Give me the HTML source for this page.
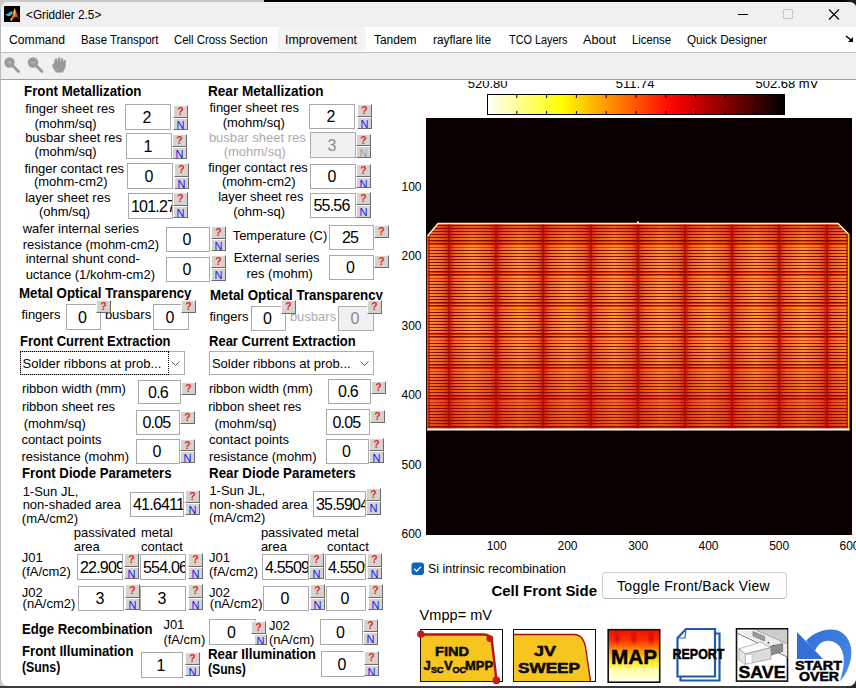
<!DOCTYPE html>
<html><head><meta charset="utf-8"><style>
html,body{margin:0;padding:0;}
body{width:856px;height:688px;position:relative;overflow:hidden;background:#c9c9c9;font-family:"Liberation Sans",sans-serif;}
.t{position:absolute;white-space:nowrap;line-height:1;}
.box{position:absolute;border:1px solid #a9a9a9;background:#fff;font-size:16px;letter-spacing:-0.8px;color:#000;overflow:hidden;white-space:nowrap;}
.box.dis{background:#f0f0f0;color:#8a8a8a;border-color:#adadad;}
.qb{position:absolute;background:#d6d3ce;border-top:1px solid #fff;border-left:1px solid #fff;border-right:1px solid #6b6b6b;border-bottom:1px solid #6b6b6b;overflow:hidden;text-align:center;}
.q{position:absolute;left:0;right:0;top:-1px;font-size:10.5px;font-weight:bold;color:#e3261c;line-height:12px;}
.n{position:absolute;left:0;right:0;top:0px;font-size:11px;color:#1515ff;line-height:12px;}
.win{position:absolute;left:0;top:2px;width:870px;height:684px;background:#fff;border-radius:7px;overflow:hidden;border-left:1px solid #b9b9b9;box-sizing:border-box;}
.pop{position:absolute;border:1px solid #adadad;background:#fff;box-sizing:border-box;}
</style></head><body>

<div style="position:absolute;left:0;top:0;width:264px;height:2px;background:#c8c8c8"></div>
<div style="position:absolute;left:264px;top:0;width:600px;height:2px;background:#000"></div>
<div style="position:absolute;left:0;top:686px;width:856px;height:2px;background:#3c3c3c"></div>
<div class="win">
<div style="position:absolute;left:0;top:0;width:870px;height:25px;background:#f0f0f0"></div>
<div style="position:absolute;left:0;top:25px;width:870px;height:25px;background:#fff"></div>
<div style="position:absolute;left:0;top:50px;width:870px;height:1px;background:#bdbdbd"></div>
<div style="position:absolute;left:0;top:51px;width:870px;height:26px;background:#f0f0f0"></div>
<div style="position:absolute;left:0;top:77px;width:870px;height:1px;background:#a0a0a0"></div>
</div>
<svg style="position:absolute;left:4px;top:6px" width="16" height="16" viewBox="0 0 16 16">
<rect width="16" height="16" fill="#000"/>
<path d="M1.2 8.8 L4.5 7.2 L7.8 5 L8.8 6.8 L6.8 9.4 L4.5 10.2 Z" fill="#4fb0dd"/>
<path d="M6.3 13.8 L8 10.2 L9.5 6 L10.5 1.8 L12 5 L13.5 9 L14.6 12.5 L12.5 10.8 L10.5 11.2 L8.5 13.2 L7.2 15 Z" fill="#e07020"/>
<path d="M10.5 2 L11.3 6 L10.2 9.5 L9.2 7 Z" fill="#f8c040"/>
<path d="M6.3 13.8 L8 12 L8.8 13 L7.2 15 Z" fill="#f8c040"/>
<path d="M11.6 4.2 L14.6 12.5 L12.6 10.8 Z" fill="#a83818"/>
</svg>
<div class="t" style="left:25.70px;top:9.49px;font-size:12.3px;color:#000;transform:scaleX(0.9576);transform-origin:0 0;">&lt;Griddler 2.5&gt;</div>
<div style="position:absolute;left:738px;top:14px;width:10px;height:1px;background:#000"></div>
<div style="position:absolute;left:783px;top:9px;width:8px;height:8px;border:1px solid #c5c5c5;border-radius:1px"></div>
<svg style="position:absolute;left:828px;top:9px" width="12" height="11" viewBox="0 0 12 11"><path d="M1 0.5 L11 10.5 M11 0.5 L1 10.5" stroke="#000" stroke-width="1.1"/></svg>
<div style="position:absolute;left:278px;top:27px;width:88px;height:24px;background:#f3f3f3;border-radius:4px"></div>
<div class="t" style="left:8.90px;top:34.39px;font-size:12.3px;color:#000;transform:scaleX(0.9870);transform-origin:0 0;">Command</div>
<div class="t" style="left:80.90px;top:34.39px;font-size:12.3px;color:#000;transform:scaleX(0.9291);transform-origin:0 0;">Base Transport</div>
<div class="t" style="left:174.40px;top:34.39px;font-size:12.3px;color:#000;transform:scaleX(0.9242);transform-origin:0 0;">Cell Cross Section</div>
<div class="t" style="left:285.40px;top:34.39px;font-size:12.3px;color:#000;transform:scaleX(1.0031);transform-origin:0 0;">Improvement</div>
<div class="t" style="left:374.40px;top:34.39px;font-size:12.3px;color:#000;transform:scaleX(0.9712);transform-origin:0 0;">Tandem</div>
<div class="t" style="left:433.40px;top:34.39px;font-size:12.3px;color:#000;transform:scaleX(0.9642);transform-origin:0 0;">rayflare lite</div>
<div class="t" style="left:508.90px;top:34.39px;font-size:12.3px;color:#000;transform:scaleX(0.8824);transform-origin:0 0;">TCO Layers</div>
<div class="t" style="left:583.40px;top:34.39px;font-size:12.3px;color:#000;transform:scaleX(1.0266);transform-origin:0 0;">About</div>
<div class="t" style="left:632.40px;top:34.39px;font-size:12.3px;color:#000;transform:scaleX(0.9199);transform-origin:0 0;">License</div>
<div class="t" style="left:687.40px;top:34.39px;font-size:12.3px;color:#000;transform:scaleX(0.9514);transform-origin:0 0;">Quick Designer</div>
<svg style="position:absolute;left:845px;top:35px" width="9" height="8" viewBox="0 0 9 8"><path d="M1 1 L6 5" stroke="#000" stroke-width="1.6"/><path d="M3 7 L8 7 L8 2 Z" fill="#000"/></svg>
<svg style="position:absolute;left:0;top:53px" width="70" height="25" viewBox="0 53 70 25">
<circle cx="9.5" cy="62.5" r="5.2" fill="#9a9a9a"/>
<path d="M9.5 60 v5 M7 62.5 h5" stroke="#bdbdbd" stroke-width="1"/>
<path d="M13 66 L18.5 71.5" stroke="#9a9a9a" stroke-width="2.8" stroke-linecap="round"/>
<circle cx="33" cy="62.5" r="5.2" fill="#9a9a9a"/>
<path d="M30.5 62.5 h5" stroke="#bdbdbd" stroke-width="1"/>
<path d="M36.5 66 L42 71.5" stroke="#9a9a9a" stroke-width="2.8" stroke-linecap="round"/>
<path d="M52 65 L54 63 L55 58.5 L57 58.5 L57.5 62 L58 57.5 L60 57.5 L60.5 62 L61 58 L63 58.5 L63.5 62 L64 60 L66 60.5 L65.5 67 L63 72.5 L56 72.5 L53 68 Z" fill="#9a9a9a"/>
</svg>
<div class="t" style="left:23.90px;top:83.65px;font-size:14px;font-weight:bold;color:#000;transform:scaleX(0.9501);transform-origin:0 0;">Front Metallization</div>
<div class="t" style="left:208.15px;top:83.65px;font-size:14px;font-weight:bold;color:#000;transform:scaleX(0.9703);transform-origin:0 0;">Rear Metallization</div>
<div class="t" style="left:19.40px;top:286.15px;font-size:14px;font-weight:bold;color:#000;transform:scaleX(0.9474);transform-origin:0 0;">Metal Optical Transparency</div>
<div class="t" style="left:209.90px;top:287.65px;font-size:14px;font-weight:bold;color:#000;transform:scaleX(0.9502);transform-origin:0 0;">Metal Optical Transparency</div>
<div class="t" style="left:20.15px;top:333.75px;font-size:14px;font-weight:bold;color:#000;transform:scaleX(0.9258);transform-origin:0 0;">Front Current Extraction</div>
<div class="t" style="left:208.90px;top:333.75px;font-size:14px;font-weight:bold;color:#000;transform:scaleX(0.9292);transform-origin:0 0;">Rear Current Extraction</div>
<div class="t" style="left:22.40px;top:465.65px;font-size:14px;font-weight:bold;color:#000;transform:scaleX(0.9420);transform-origin:0 0;">Front Diode Parameters</div>
<div class="t" style="left:208.90px;top:465.65px;font-size:14px;font-weight:bold;color:#000;transform:scaleX(0.9524);transform-origin:0 0;">Rear Diode Parameters</div>
<div class="t" style="left:21.80px;top:622.05px;font-size:14px;font-weight:bold;color:#000;transform:scaleX(0.9380);transform-origin:0 0;">Edge Recombination</div>
<div class="t" style="left:21.80px;top:644.45px;font-size:14px;font-weight:bold;color:#000;transform:scaleX(0.9433);transform-origin:0 0;">Front Illumination</div>
<div class="t" style="left:21.80px;top:660.35px;font-size:14px;font-weight:bold;color:#000;transform:scaleX(0.8794);transform-origin:0 0;">(Suns)</div>
<div class="t" style="left:208.40px;top:646.65px;font-size:14px;font-weight:bold;color:#000;transform:scaleX(0.9509);transform-origin:0 0;">Rear Illumination</div>
<div class="t" style="left:208.40px;top:662.25px;font-size:14px;font-weight:bold;color:#000;transform:scaleX(0.8702);transform-origin:0 0;">(Suns)</div>
<div class="t" style="left:25.15px;top:102.00px;font-size:13px;color:#000;">finger sheet res</div>
<div class="t" style="left:34.40px;top:117.00px;font-size:13px;color:#000;">(mohm/sq)</div>
<div class="t" style="left:25.15px;top:130.75px;font-size:13px;color:#000;">busbar sheet res</div>
<div class="t" style="left:34.40px;top:145.25px;font-size:13px;color:#000;">(mohm/sq)</div>
<div class="t" style="left:24.40px;top:161.50px;font-size:13px;color:#000;">finger contact res</div>
<div class="t" style="left:33.90px;top:175.25px;font-size:13px;color:#000;">(mohm-cm2)</div>
<div class="t" style="left:25.15px;top:190.75px;font-size:13px;color:#000;">layer sheet res</div>
<div class="t" style="left:38.90px;top:205.25px;font-size:13px;color:#000;">(ohm/sq)</div>
<div class="t" style="left:22.65px;top:222.00px;font-size:13px;color:#000;">wafer internal series</div>
<div class="t" style="left:22.65px;top:237.75px;font-size:13px;color:#000;">resistance (mohm-cm2)</div>
<div class="t" style="left:25.65px;top:252.00px;font-size:13px;color:#000;">internal shunt cond-</div>
<div class="t" style="left:25.65px;top:267.75px;font-size:13px;color:#000;">uctance (1/kohm-cm2)</div>
<div class="t" style="left:21.40px;top:308.25px;font-size:13px;color:#000;">fingers</div>
<div class="t" style="left:104.90px;top:308.25px;font-size:13px;color:#000;">busbars</div>
<div class="t" style="left:21.90px;top:381.50px;font-size:13px;color:#000;">ribbon width (mm)</div>
<div class="t" style="left:21.90px;top:400.25px;font-size:13px;color:#000;">ribbon sheet res</div>
<div class="t" style="left:23.65px;top:416.50px;font-size:13px;color:#000;">(mohm/sq)</div>
<div class="t" style="left:21.40px;top:433.25px;font-size:13px;color:#000;">contact points</div>
<div class="t" style="left:21.40px;top:449.75px;font-size:13px;color:#000;">resistance (mohm)</div>
<div class="t" style="left:22.65px;top:484.50px;font-size:13px;color:#000;">1-Sun JL,</div>
<div class="t" style="left:22.65px;top:498.40px;font-size:13px;color:#000;">non-shaded area</div>
<div class="t" style="left:21.80px;top:512.20px;font-size:13px;color:#000;">(mA/cm2)</div>
<div class="t" style="left:73.70px;top:525.90px;font-size:13px;color:#000;">passivated</div>
<div class="t" style="left:73.70px;top:540.40px;font-size:13px;color:#000;">area</div>
<div class="t" style="left:141.00px;top:525.90px;font-size:13px;color:#000;">metal</div>
<div class="t" style="left:141.00px;top:540.40px;font-size:13px;color:#000;">contact</div>
<div class="t" style="left:21.80px;top:550.50px;font-size:13px;color:#000;">J01</div>
<div class="t" style="left:21.80px;top:565.00px;font-size:13px;color:#000;">(fA/cm2)</div>
<div class="t" style="left:21.80px;top:585.50px;font-size:13px;color:#000;">J02</div>
<div class="t" style="left:22.60px;top:597.00px;font-size:13px;color:#000;">(nA/cm2)</div>
<div class="t" style="left:163.40px;top:618.00px;font-size:13px;color:#000;">J01</div>
<div class="t" style="left:163.40px;top:633.00px;font-size:13px;color:#000;">(fA/cm)</div>
<div class="t" style="left:209.40px;top:101.00px;font-size:13px;color:#000;">finger sheet res</div>
<div class="t" style="left:222.65px;top:115.75px;font-size:13px;color:#000;">(mohm/sq)</div>
<div class="t" style="left:208.15px;top:160.75px;font-size:13px;color:#000;">finger contact res</div>
<div class="t" style="left:221.90px;top:174.75px;font-size:13px;color:#000;">(mohm-cm2)</div>
<div class="t" style="left:218.15px;top:189.75px;font-size:13px;color:#000;">layer sheet res</div>
<div class="t" style="left:233.15px;top:204.75px;font-size:13px;color:#000;">(ohm-sq)</div>
<div class="t" style="left:232.65px;top:229.00px;font-size:13px;color:#000;">Temperature (C)</div>
<div class="t" style="left:233.65px;top:251.00px;font-size:13px;color:#000;">External series</div>
<div class="t" style="left:246.40px;top:266.50px;font-size:13px;color:#000;">res (mohm)</div>
<div class="t" style="left:209.40px;top:310.25px;font-size:13px;color:#000;">fingers</div>
<div class="t" style="left:208.90px;top:382.25px;font-size:13px;color:#000;">ribbon width (mm)</div>
<div class="t" style="left:208.15px;top:400.25px;font-size:13px;color:#000;">ribbon sheet res</div>
<div class="t" style="left:214.40px;top:416.50px;font-size:13px;color:#000;">(mohm/sq)</div>
<div class="t" style="left:208.90px;top:433.25px;font-size:13px;color:#000;">contact points</div>
<div class="t" style="left:208.90px;top:449.50px;font-size:13px;color:#000;">resistance (mohm)</div>
<div class="t" style="left:209.40px;top:484.00px;font-size:13px;color:#000;">1-Sun JL,</div>
<div class="t" style="left:209.40px;top:497.75px;font-size:13px;color:#000;">non-shaded area</div>
<div class="t" style="left:209.00px;top:511.40px;font-size:13px;color:#000;">(mA/cm2)</div>
<div class="t" style="left:260.90px;top:525.90px;font-size:13px;color:#000;">passivated</div>
<div class="t" style="left:260.90px;top:540.40px;font-size:13px;color:#000;">area</div>
<div class="t" style="left:327.00px;top:525.90px;font-size:13px;color:#000;">metal</div>
<div class="t" style="left:327.00px;top:540.40px;font-size:13px;color:#000;">contact</div>
<div class="t" style="left:209.00px;top:550.50px;font-size:13px;color:#000;">J01</div>
<div class="t" style="left:209.00px;top:565.00px;font-size:13px;color:#000;">(fA/cm2)</div>
<div class="t" style="left:209.00px;top:585.50px;font-size:13px;color:#000;">J02</div>
<div class="t" style="left:209.80px;top:597.00px;font-size:13px;color:#000;">(nA/cm2)</div>
<div class="t" style="left:268.90px;top:618.60px;font-size:13px;color:#000;">J02</div>
<div class="t" style="left:268.90px;top:633.00px;font-size:13px;color:#000;">(nA/cm)</div>
<div class="t" style="left:208.90px;top:130.75px;font-size:13px;color:#ababab;">busbar sheet res</div>
<div class="t" style="left:223.65px;top:144.75px;font-size:13px;color:#ababab;">(mohm/sq)</div>
<div class="t" style="left:289.90px;top:310.25px;font-size:13px;color:#ababab;">busbars</div>
<div class="box" style="left:125px;top:104px;width:44px;height:24px;line-height:25px;text-align:center;padding-right:3px;width:41px;">2</div>
<div class="box" style="left:126px;top:133px;width:44px;height:24px;line-height:25px;text-align:center;padding-right:3px;width:41px;">1</div>
<div class="box" style="left:127px;top:163px;width:44px;height:24px;line-height:25px;text-align:center;padding-right:3px;width:41px;">0</div>
<div class="box" style="left:128px;top:193px;width:43px;height:24px;line-height:25px;text-align:left;padding-left:2px;width:41px;">101.27</div>
<div class="box" style="left:166px;top:227px;width:42px;height:23px;line-height:24px;text-align:center;padding-right:3px;width:39px;">0</div>
<div class="box" style="left:166px;top:257px;width:42px;height:23px;line-height:24px;text-align:center;padding-right:3px;width:39px;">0</div>
<div class="box" style="left:66px;top:304px;width:33px;height:24px;line-height:25px;text-align:center;padding-right:3px;width:30px;">0</div>
<div class="box" style="left:153px;top:304px;width:34px;height:24px;line-height:25px;text-align:center;padding-right:3px;width:31px;">0</div>
<div class="box" style="left:138px;top:380px;width:41px;height:22px;line-height:23px;text-align:center;padding-right:3px;width:38px;">0.6</div>
<div class="box" style="left:136px;top:410px;width:42px;height:23px;line-height:24px;text-align:center;padding-right:3px;width:39px;">0.05</div>
<div class="box" style="left:136px;top:439px;width:42px;height:23px;line-height:24px;text-align:center;padding-right:3px;width:39px;">0</div>
<div class="box" style="left:130px;top:492px;width:52px;height:23px;line-height:24px;text-align:left;padding-left:2px;width:50px;">41.6411</div>
<div class="box" style="left:77px;top:554px;width:44px;height:24px;line-height:25px;text-align:left;padding-left:2px;width:42px;">22.909</div>
<div class="box" style="left:140px;top:554px;width:44px;height:24px;line-height:25px;text-align:left;padding-left:2px;width:42px;">554.06</div>
<div class="box" style="left:78px;top:586px;width:44px;height:23px;line-height:24px;text-align:center;padding-right:3px;width:41px;">3</div>
<div class="box" style="left:140px;top:586px;width:44px;height:23px;line-height:24px;text-align:center;padding-right:3px;width:41px;">3</div>
<div class="box" style="left:141px;top:652px;width:40px;height:24px;line-height:25px;text-align:center;padding-right:3px;width:37px;">1</div>
<div class="box" style="left:309px;top:104px;width:44px;height:23px;line-height:24px;text-align:center;padding-right:3px;width:41px;">2</div>
<div class="box" style="left:310px;top:164px;width:44px;height:23px;line-height:24px;text-align:center;padding-right:3px;width:41px;">0</div>
<div class="box" style="left:310px;top:193px;width:44px;height:23px;line-height:24px;text-align:center;padding-right:3px;width:41px;">55.56</div>
<div class="box" style="left:329px;top:225px;width:43px;height:23px;line-height:24px;text-align:center;padding-right:3px;width:40px;">25</div>
<div class="box" style="left:329px;top:255px;width:43px;height:23px;line-height:24px;text-align:center;padding-right:3px;width:40px;">0</div>
<div class="box" style="left:251px;top:306px;width:33px;height:23px;line-height:24px;text-align:center;padding-right:3px;width:30px;">0</div>
<div class="box" style="left:328px;top:379px;width:41px;height:23px;line-height:24px;text-align:center;padding-right:3px;width:38px;">0.6</div>
<div class="box" style="left:326px;top:409px;width:42px;height:24px;line-height:25px;text-align:center;padding-right:3px;width:39px;">0.05</div>
<div class="box" style="left:326px;top:439px;width:41px;height:23px;line-height:24px;text-align:center;padding-right:3px;width:38px;">0</div>
<div class="box" style="left:313px;top:491px;width:51px;height:24px;line-height:25px;text-align:left;padding-left:2px;width:49px;">35.5904</div>
<div class="box" style="left:262px;top:554px;width:45px;height:24px;line-height:25px;text-align:left;padding-left:2px;width:43px;">4.5509</div>
<div class="box" style="left:325px;top:554px;width:39px;height:24px;line-height:25px;text-align:left;padding-left:2px;width:37px;">4.5509</div>
<div class="box" style="left:263px;top:586px;width:44px;height:23px;line-height:24px;text-align:center;padding-right:3px;width:41px;">0</div>
<div class="box" style="left:326px;top:586px;width:38px;height:23px;line-height:24px;text-align:center;padding-right:3px;width:35px;">0</div>
<div class="box" style="left:209px;top:619px;width:45px;height:24px;line-height:25px;text-align:center;padding-right:3px;width:42px;">0</div>
<div class="box" style="left:320px;top:619px;width:41px;height:24px;line-height:25px;text-align:center;padding-right:3px;width:38px;">0</div>
<div class="box" style="left:321px;top:651px;width:42px;height:24px;line-height:25px;text-align:center;padding-right:3px;width:39px;">0</div>
<div class="box dis" style="left:310px;top:132px;width:44px;height:24px;line-height:25px;text-align:center;padding-right:3px;width:41px;">3</div>
<div class="box dis" style="left:338px;top:306px;width:34px;height:23px;line-height:24px;text-align:center;padding-right:3px;width:31px;">0</div>
<div class="qb" style="left:173px;top:105px;width:13px;height:11px;"><span class="q">?</span></div>
<div class="qb" style="left:173px;top:118px;width:13px;height:10px;"><span class="n">N</span></div>
<div class="qb" style="left:172px;top:134px;width:13px;height:11px;"><span class="q">?</span></div>
<div class="qb" style="left:172px;top:147px;width:13px;height:10px;"><span class="n">N</span></div>
<div class="qb" style="left:174px;top:163px;width:13px;height:12px;"><span class="q">?</span></div>
<div class="qb" style="left:174px;top:177px;width:13px;height:10px;"><span class="n">N</span></div>
<div class="qb" style="left:173px;top:192px;width:13px;height:12px;"><span class="q">?</span></div>
<div class="qb" style="left:173px;top:206px;width:13px;height:10px;"><span class="n">N</span></div>
<div class="qb" style="left:211px;top:226px;width:13px;height:11px;"><span class="q">?</span></div>
<div class="qb" style="left:211px;top:239px;width:13px;height:10px;"><span class="n">N</span></div>
<div class="qb" style="left:211px;top:255px;width:13px;height:11px;"><span class="q">?</span></div>
<div class="qb" style="left:211px;top:268px;width:13px;height:11px;"><span class="n">N</span></div>
<div class="qb" style="left:96px;top:300px;width:13px;height:11px;"><span class="q">?</span></div>
<div class="qb" style="left:181px;top:300px;width:13px;height:11px;"><span class="q">?</span></div>
<div class="qb" style="left:181px;top:382px;width:13px;height:11px;"><span class="q">?</span></div>
<div class="qb" style="left:180px;top:411px;width:13px;height:11px;"><span class="q">?</span></div>
<div class="qb" style="left:180px;top:439px;width:13px;height:10px;"><span class="q">?</span></div>
<div class="qb" style="left:180px;top:451px;width:13px;height:10px;"><span class="n">N</span></div>
<div class="qb" style="left:185px;top:490px;width:13px;height:11px;"><span class="q">?</span></div>
<div class="qb" style="left:185px;top:503px;width:13px;height:10px;"><span class="n">N</span></div>
<div class="qb" style="left:124px;top:553px;width:13px;height:12px;"><span class="q">?</span></div>
<div class="qb" style="left:124px;top:567px;width:13px;height:10px;"><span class="n">N</span></div>
<div class="qb" style="left:188px;top:553px;width:13px;height:12px;"><span class="q">?</span></div>
<div class="qb" style="left:188px;top:567px;width:13px;height:10px;"><span class="n">N</span></div>
<div class="qb" style="left:125px;top:584px;width:13px;height:12px;"><span class="q">?</span></div>
<div class="qb" style="left:125px;top:598px;width:13px;height:10px;"><span class="n">N</span></div>
<div class="qb" style="left:188px;top:584px;width:13px;height:12px;"><span class="q">?</span></div>
<div class="qb" style="left:188px;top:598px;width:13px;height:10px;"><span class="n">N</span></div>
<div class="qb" style="left:185px;top:652px;width:13px;height:11px;"><span class="q">?</span></div>
<div class="qb" style="left:185px;top:665px;width:13px;height:9px;"><span class="n">N</span></div>
<div class="qb" style="left:357px;top:104px;width:13px;height:11px;"><span class="q">?</span></div>
<div class="qb" style="left:357px;top:117px;width:13px;height:10px;"><span class="n">N</span></div>
<div class="qb" style="left:356px;top:164px;width:13px;height:11px;"><span class="q">?</span></div>
<div class="qb" style="left:356px;top:177px;width:13px;height:9px;"><span class="n">N</span></div>
<div class="qb" style="left:356px;top:192px;width:13px;height:11px;"><span class="q">?</span></div>
<div class="qb" style="left:356px;top:205px;width:13px;height:11px;"><span class="n">N</span></div>
<div class="qb" style="left:374px;top:225px;width:13px;height:11px;"><span class="q">?</span></div>
<div class="qb" style="left:374px;top:255px;width:13px;height:11px;"><span class="q">?</span></div>
<div class="qb" style="left:281px;top:300px;width:13px;height:12px;"><span class="q">?</span></div>
<div class="qb" style="left:367px;top:300px;width:13px;height:12px;"><span class="q">?</span></div>
<div class="qb" style="left:371px;top:381px;width:13px;height:11px;"><span class="q">?</span></div>
<div class="qb" style="left:370px;top:410px;width:13px;height:11px;"><span class="q">?</span></div>
<div class="qb" style="left:369px;top:438px;width:13px;height:11px;"><span class="q">?</span></div>
<div class="qb" style="left:369px;top:451px;width:13px;height:10px;"><span class="n">N</span></div>
<div class="qb" style="left:366px;top:488px;width:13px;height:11px;"><span class="q">?</span></div>
<div class="qb" style="left:366px;top:501px;width:13px;height:12px;"><span class="n">N</span></div>
<div class="qb" style="left:309px;top:553px;width:13px;height:12px;"><span class="q">?</span></div>
<div class="qb" style="left:309px;top:567px;width:13px;height:10px;"><span class="n">N</span></div>
<div class="qb" style="left:367px;top:553px;width:13px;height:12px;"><span class="q">?</span></div>
<div class="qb" style="left:367px;top:567px;width:13px;height:10px;"><span class="n">N</span></div>
<div class="qb" style="left:310px;top:584px;width:13px;height:12px;"><span class="q">?</span></div>
<div class="qb" style="left:310px;top:598px;width:13px;height:10px;"><span class="n">N</span></div>
<div class="qb" style="left:368px;top:584px;width:13px;height:12px;"><span class="q">?</span></div>
<div class="qb" style="left:368px;top:598px;width:13px;height:10px;"><span class="n">N</span></div>
<div class="qb" style="left:363px;top:619px;width:13px;height:11px;"><span class="q">?</span></div>
<div class="qb" style="left:363px;top:632px;width:13px;height:11px;"><span class="n">N</span></div>
<div class="qb" style="left:364px;top:651px;width:13px;height:12px;"><span class="q">?</span></div>
<div class="qb" style="left:364px;top:665px;width:13px;height:9px;"><span class="n">N</span></div>
<div class="qb" style="left:356px;top:134px;width:13px;height:10px;"><span class="q">?</span></div>
<div class="qb" style="left:356px;top:146px;width:13px;height:10px;"><span class="n" style="color:#a0a0a0">N</span></div>
<div class="qb" style="left:251px;top:621px;width:13px;height:11px;"><span class="q">?</span></div>
<div class="qb" style="left:254px;top:634px;width:11px;height:9px;"><span class="n">N</span></div>
<div class="pop" style="left:20px;top:351px;width:165px;height:24px;"></div>
<div style="position:absolute;left:20px;top:351px;width:149px;height:24px;box-sizing:border-box;border:1px dotted #000;"></div>
<div class="t" style="left:22.60px;top:356.70px;font-size:13px;color:#000;">Solder ribbons at prob...</div>
<svg style="position:absolute;left:171px;top:361px" width="10" height="6" viewBox="0 0 10 6"><path d="M0.5 0.5 L4.5 4.5 L8.5 0.5" stroke="#606060" stroke-width="1" fill="none"/></svg>
<div class="pop" style="left:209px;top:351px;width:165px;height:24px;"></div>
<div class="t" style="left:211.90px;top:356.50px;font-size:13px;color:#000;">Solder ribbons at prob...</div>
<svg style="position:absolute;left:360px;top:361px" width="10" height="6" viewBox="0 0 10 6"><path d="M0.5 0.5 L4.5 4.5 L8.5 0.5" stroke="#606060" stroke-width="1" fill="none"/></svg>
<svg style="position:absolute;left:0;top:0" width="856" height="688" viewBox="0 0 856 688" shape-rendering="crispEdges">
<defs>
<linearGradient id="gD" gradientUnits="userSpaceOnUse" x1="449" y1="0" x2="496.2" y2="0" spreadMethod="repeat"><stop offset="0" stop-color="#600400"/><stop offset="0.15" stop-color="#7a0800"/><stop offset="0.5" stop-color="#901200"/><stop offset="0.85" stop-color="#7a0800"/><stop offset="1" stop-color="#600400"/></linearGradient>
<linearGradient id="gR" gradientUnits="userSpaceOnUse" x1="449" y1="0" x2="496.2" y2="0" spreadMethod="repeat"><stop offset="0" stop-color="#b00800"/><stop offset="0.15" stop-color="#d82008"/><stop offset="0.5" stop-color="#e83c10"/><stop offset="0.85" stop-color="#d82008"/><stop offset="1" stop-color="#b00800"/></linearGradient>
<linearGradient id="gB" gradientUnits="userSpaceOnUse" x1="449" y1="0" x2="496.2" y2="0" spreadMethod="repeat"><stop offset="0" stop-color="#dc3812"/><stop offset="0.15" stop-color="#f27024"/><stop offset="0.5" stop-color="#fca034"/><stop offset="0.85" stop-color="#f27024"/><stop offset="1" stop-color="#dc3812"/></linearGradient>
<linearGradient id="vt" x1="0" y1="0" x2="0" y2="1">
<stop offset="0" stop-color="#c00000" stop-opacity="0.45"/><stop offset="0.12" stop-color="#c00000" stop-opacity="0.05"/><stop offset="0.55" stop-color="#c00000" stop-opacity="0.0"/><stop offset="1" stop-color="#b00000" stop-opacity="0.4"/>
</linearGradient>
</defs>
<rect x="426" y="118" width="426" height="417" fill="#0a0000"/>
<clipPath id="cellclip"><polygon points="427,236 438,223 838,223 849,234 849,429 427,429"/></clipPath>
<g clip-path="url(#cellclip)">
<rect x="427" y="224" width="422" height="1" fill="url(#gB)"/><rect x="427" y="225" width="422" height="1" fill="url(#gD)"/><rect x="427" y="226" width="422" height="1" fill="url(#gB)"/><rect x="427" y="227" width="422" height="1" fill="url(#gB)"/><rect x="427" y="228" width="422" height="1" fill="url(#gD)"/><rect x="427" y="229" width="422" height="1" fill="url(#gB)"/><rect x="427" y="230" width="422" height="1" fill="url(#gB)"/><rect x="427" y="231" width="422" height="1" fill="url(#gD)"/><rect x="427" y="232" width="422" height="1" fill="url(#gB)"/><rect x="427" y="233" width="422" height="1" fill="url(#gB)"/><rect x="427" y="234" width="422" height="1" fill="url(#gD)"/><rect x="427" y="235" width="422" height="1" fill="url(#gB)"/><rect x="427" y="236" width="422" height="1" fill="url(#gB)"/><rect x="427" y="237" width="422" height="1" fill="url(#gD)"/><rect x="427" y="238" width="422" height="1" fill="url(#gB)"/><rect x="427" y="239" width="422" height="1" fill="url(#gB)"/><rect x="427" y="240" width="422" height="1" fill="url(#gD)"/><rect x="427" y="241" width="422" height="1" fill="url(#gR)"/><rect x="427" y="242" width="422" height="1" fill="url(#gB)"/><rect x="427" y="243" width="422" height="1" fill="url(#gD)"/><rect x="427" y="244" width="422" height="1" fill="url(#gR)"/><rect x="427" y="245" width="422" height="1" fill="url(#gB)"/><rect x="427" y="246" width="422" height="1" fill="url(#gB)"/><rect x="427" y="247" width="422" height="1" fill="url(#gR)"/><rect x="427" y="248" width="422" height="1" fill="url(#gB)"/><rect x="427" y="249" width="422" height="1" fill="url(#gB)"/><rect x="427" y="250" width="422" height="1" fill="url(#gD)"/><rect x="427" y="251" width="422" height="1" fill="url(#gB)"/><rect x="427" y="252" width="422" height="1" fill="url(#gB)"/><rect x="427" y="253" width="422" height="1" fill="url(#gD)"/><rect x="427" y="254" width="422" height="1" fill="url(#gB)"/><rect x="427" y="255" width="422" height="1" fill="url(#gB)"/><rect x="427" y="256" width="422" height="1" fill="url(#gD)"/><rect x="427" y="257" width="422" height="1" fill="url(#gB)"/><rect x="427" y="258" width="422" height="1" fill="url(#gB)"/><rect x="427" y="259" width="422" height="1" fill="url(#gD)"/><rect x="427" y="260" width="422" height="1" fill="url(#gB)"/><rect x="427" y="261" width="422" height="1" fill="url(#gB)"/><rect x="427" y="262" width="422" height="1" fill="url(#gD)"/><rect x="427" y="263" width="422" height="1" fill="url(#gB)"/><rect x="427" y="264" width="422" height="1" fill="url(#gB)"/><rect x="427" y="265" width="422" height="1" fill="url(#gD)"/><rect x="427" y="266" width="422" height="1" fill="url(#gB)"/><rect x="427" y="267" width="422" height="1" fill="url(#gB)"/><rect x="427" y="268" width="422" height="1" fill="url(#gD)"/><rect x="427" y="269" width="422" height="1" fill="url(#gB)"/><rect x="427" y="270" width="422" height="1" fill="url(#gB)"/><rect x="427" y="271" width="422" height="1" fill="url(#gD)"/><rect x="427" y="272" width="422" height="1" fill="url(#gR)"/><rect x="427" y="273" width="422" height="1" fill="url(#gB)"/><rect x="427" y="274" width="422" height="1" fill="url(#gD)"/><rect x="427" y="275" width="422" height="1" fill="url(#gR)"/><rect x="427" y="276" width="422" height="1" fill="url(#gB)"/><rect x="427" y="277" width="422" height="1" fill="url(#gB)"/><rect x="427" y="278" width="422" height="1" fill="url(#gR)"/><rect x="427" y="279" width="422" height="1" fill="url(#gB)"/><rect x="427" y="280" width="422" height="1" fill="url(#gB)"/><rect x="427" y="281" width="422" height="1" fill="url(#gD)"/><rect x="427" y="282" width="422" height="1" fill="url(#gB)"/><rect x="427" y="283" width="422" height="1" fill="url(#gB)"/><rect x="427" y="284" width="422" height="1" fill="url(#gD)"/><rect x="427" y="285" width="422" height="1" fill="url(#gB)"/><rect x="427" y="286" width="422" height="1" fill="url(#gB)"/><rect x="427" y="287" width="422" height="1" fill="url(#gD)"/><rect x="427" y="288" width="422" height="1" fill="url(#gB)"/><rect x="427" y="289" width="422" height="1" fill="url(#gB)"/><rect x="427" y="290" width="422" height="1" fill="url(#gD)"/><rect x="427" y="291" width="422" height="1" fill="url(#gB)"/><rect x="427" y="292" width="422" height="1" fill="url(#gB)"/><rect x="427" y="293" width="422" height="1" fill="url(#gD)"/><rect x="427" y="294" width="422" height="1" fill="url(#gB)"/><rect x="427" y="295" width="422" height="1" fill="url(#gB)"/><rect x="427" y="296" width="422" height="1" fill="url(#gD)"/><rect x="427" y="297" width="422" height="1" fill="url(#gB)"/><rect x="427" y="298" width="422" height="1" fill="url(#gB)"/><rect x="427" y="299" width="422" height="1" fill="url(#gD)"/><rect x="427" y="300" width="422" height="1" fill="url(#gB)"/><rect x="427" y="301" width="422" height="1" fill="url(#gB)"/><rect x="427" y="302" width="422" height="1" fill="url(#gD)"/><rect x="427" y="303" width="422" height="1" fill="url(#gR)"/><rect x="427" y="304" width="422" height="1" fill="url(#gB)"/><rect x="427" y="305" width="422" height="1" fill="url(#gD)"/><rect x="427" y="306" width="422" height="1" fill="url(#gR)"/><rect x="427" y="307" width="422" height="1" fill="url(#gB)"/><rect x="427" y="308" width="422" height="1" fill="url(#gB)"/><rect x="427" y="309" width="422" height="1" fill="url(#gR)"/><rect x="427" y="310" width="422" height="1" fill="url(#gB)"/><rect x="427" y="311" width="422" height="1" fill="url(#gB)"/><rect x="427" y="312" width="422" height="1" fill="url(#gD)"/><rect x="427" y="313" width="422" height="1" fill="url(#gB)"/><rect x="427" y="314" width="422" height="1" fill="url(#gB)"/><rect x="427" y="315" width="422" height="1" fill="url(#gD)"/><rect x="427" y="316" width="422" height="1" fill="url(#gB)"/><rect x="427" y="317" width="422" height="1" fill="url(#gB)"/><rect x="427" y="318" width="422" height="1" fill="url(#gD)"/><rect x="427" y="319" width="422" height="1" fill="url(#gB)"/><rect x="427" y="320" width="422" height="1" fill="url(#gB)"/><rect x="427" y="321" width="422" height="1" fill="url(#gD)"/><rect x="427" y="322" width="422" height="1" fill="url(#gB)"/><rect x="427" y="323" width="422" height="1" fill="url(#gB)"/><rect x="427" y="324" width="422" height="1" fill="url(#gD)"/><rect x="427" y="325" width="422" height="1" fill="url(#gB)"/><rect x="427" y="326" width="422" height="1" fill="url(#gB)"/><rect x="427" y="327" width="422" height="1" fill="url(#gD)"/><rect x="427" y="328" width="422" height="1" fill="url(#gB)"/><rect x="427" y="329" width="422" height="1" fill="url(#gB)"/><rect x="427" y="330" width="422" height="1" fill="url(#gD)"/><rect x="427" y="331" width="422" height="1" fill="url(#gB)"/><rect x="427" y="332" width="422" height="1" fill="url(#gB)"/><rect x="427" y="333" width="422" height="1" fill="url(#gD)"/><rect x="427" y="334" width="422" height="1" fill="url(#gR)"/><rect x="427" y="335" width="422" height="1" fill="url(#gB)"/><rect x="427" y="336" width="422" height="1" fill="url(#gD)"/><rect x="427" y="337" width="422" height="1" fill="url(#gR)"/><rect x="427" y="338" width="422" height="1" fill="url(#gB)"/><rect x="427" y="339" width="422" height="1" fill="url(#gB)"/><rect x="427" y="340" width="422" height="1" fill="url(#gR)"/><rect x="427" y="341" width="422" height="1" fill="url(#gB)"/><rect x="427" y="342" width="422" height="1" fill="url(#gB)"/><rect x="427" y="343" width="422" height="1" fill="url(#gD)"/><rect x="427" y="344" width="422" height="1" fill="url(#gB)"/><rect x="427" y="345" width="422" height="1" fill="url(#gB)"/><rect x="427" y="346" width="422" height="1" fill="url(#gD)"/><rect x="427" y="347" width="422" height="1" fill="url(#gB)"/><rect x="427" y="348" width="422" height="1" fill="url(#gB)"/><rect x="427" y="349" width="422" height="1" fill="url(#gD)"/><rect x="427" y="350" width="422" height="1" fill="url(#gB)"/><rect x="427" y="351" width="422" height="1" fill="url(#gB)"/><rect x="427" y="352" width="422" height="1" fill="url(#gD)"/><rect x="427" y="353" width="422" height="1" fill="url(#gB)"/><rect x="427" y="354" width="422" height="1" fill="url(#gB)"/><rect x="427" y="355" width="422" height="1" fill="url(#gD)"/><rect x="427" y="356" width="422" height="1" fill="url(#gB)"/><rect x="427" y="357" width="422" height="1" fill="url(#gB)"/><rect x="427" y="358" width="422" height="1" fill="url(#gD)"/><rect x="427" y="359" width="422" height="1" fill="url(#gB)"/><rect x="427" y="360" width="422" height="1" fill="url(#gB)"/><rect x="427" y="361" width="422" height="1" fill="url(#gD)"/><rect x="427" y="362" width="422" height="1" fill="url(#gB)"/><rect x="427" y="363" width="422" height="1" fill="url(#gB)"/><rect x="427" y="364" width="422" height="1" fill="url(#gD)"/><rect x="427" y="365" width="422" height="1" fill="url(#gR)"/><rect x="427" y="366" width="422" height="1" fill="url(#gB)"/><rect x="427" y="367" width="422" height="1" fill="url(#gD)"/><rect x="427" y="368" width="422" height="1" fill="url(#gR)"/><rect x="427" y="369" width="422" height="1" fill="url(#gB)"/><rect x="427" y="370" width="422" height="1" fill="url(#gB)"/><rect x="427" y="371" width="422" height="1" fill="url(#gR)"/><rect x="427" y="372" width="422" height="1" fill="url(#gB)"/><rect x="427" y="373" width="422" height="1" fill="url(#gB)"/><rect x="427" y="374" width="422" height="1" fill="url(#gD)"/><rect x="427" y="375" width="422" height="1" fill="url(#gB)"/><rect x="427" y="376" width="422" height="1" fill="url(#gB)"/><rect x="427" y="377" width="422" height="1" fill="url(#gD)"/><rect x="427" y="378" width="422" height="1" fill="url(#gB)"/><rect x="427" y="379" width="422" height="1" fill="url(#gB)"/><rect x="427" y="380" width="422" height="1" fill="url(#gD)"/><rect x="427" y="381" width="422" height="1" fill="url(#gB)"/><rect x="427" y="382" width="422" height="1" fill="url(#gB)"/><rect x="427" y="383" width="422" height="1" fill="url(#gD)"/><rect x="427" y="384" width="422" height="1" fill="url(#gB)"/><rect x="427" y="385" width="422" height="1" fill="url(#gB)"/><rect x="427" y="386" width="422" height="1" fill="url(#gD)"/><rect x="427" y="387" width="422" height="1" fill="url(#gB)"/><rect x="427" y="388" width="422" height="1" fill="url(#gB)"/><rect x="427" y="389" width="422" height="1" fill="url(#gD)"/><rect x="427" y="390" width="422" height="1" fill="url(#gB)"/><rect x="427" y="391" width="422" height="1" fill="url(#gB)"/><rect x="427" y="392" width="422" height="1" fill="url(#gD)"/><rect x="427" y="393" width="422" height="1" fill="url(#gB)"/><rect x="427" y="394" width="422" height="1" fill="url(#gB)"/><rect x="427" y="395" width="422" height="1" fill="url(#gD)"/><rect x="427" y="396" width="422" height="1" fill="url(#gR)"/><rect x="427" y="397" width="422" height="1" fill="url(#gB)"/><rect x="427" y="398" width="422" height="1" fill="url(#gD)"/><rect x="427" y="399" width="422" height="1" fill="url(#gR)"/><rect x="427" y="400" width="422" height="1" fill="url(#gB)"/><rect x="427" y="401" width="422" height="1" fill="url(#gB)"/><rect x="427" y="402" width="422" height="1" fill="url(#gR)"/><rect x="427" y="403" width="422" height="1" fill="url(#gB)"/><rect x="427" y="404" width="422" height="1" fill="url(#gB)"/><rect x="427" y="405" width="422" height="1" fill="url(#gD)"/><rect x="427" y="406" width="422" height="1" fill="url(#gB)"/><rect x="427" y="407" width="422" height="1" fill="url(#gB)"/><rect x="427" y="408" width="422" height="1" fill="url(#gD)"/><rect x="427" y="409" width="422" height="1" fill="url(#gB)"/><rect x="427" y="410" width="422" height="1" fill="url(#gB)"/><rect x="427" y="411" width="422" height="1" fill="url(#gD)"/><rect x="427" y="412" width="422" height="1" fill="url(#gB)"/><rect x="427" y="413" width="422" height="1" fill="url(#gB)"/><rect x="427" y="414" width="422" height="1" fill="url(#gD)"/><rect x="427" y="415" width="422" height="1" fill="url(#gB)"/><rect x="427" y="416" width="422" height="1" fill="url(#gB)"/><rect x="427" y="417" width="422" height="1" fill="url(#gD)"/><rect x="427" y="418" width="422" height="1" fill="url(#gB)"/><rect x="427" y="419" width="422" height="1" fill="url(#gB)"/><rect x="427" y="420" width="422" height="1" fill="url(#gD)"/><rect x="427" y="421" width="422" height="1" fill="url(#gB)"/><rect x="427" y="422" width="422" height="1" fill="url(#gB)"/><rect x="427" y="423" width="422" height="1" fill="url(#gD)"/><rect x="427" y="424" width="422" height="1" fill="url(#gB)"/><rect x="427" y="425" width="422" height="1" fill="url(#gB)"/><rect x="427" y="426" width="422" height="1" fill="url(#gD)"/><rect x="427" y="427" width="422" height="1" fill="url(#gR)"/><rect x="427" y="428" width="422" height="1" fill="url(#gB)"/>
<rect x="427" y="223" width="422" height="206" fill="url(#vt)"/>
<rect x="446.5" y="223" width="5" height="206" fill="#e01000" opacity="0.38"/><rect x="448.0" y="223" width="2" height="206" fill="#800600" opacity="0.42"/><rect x="493.7" y="223" width="5" height="206" fill="#e01000" opacity="0.38"/><rect x="495.2" y="223" width="2" height="206" fill="#800600" opacity="0.42"/><rect x="540.9" y="223" width="5" height="206" fill="#e01000" opacity="0.38"/><rect x="542.4" y="223" width="2" height="206" fill="#800600" opacity="0.42"/><rect x="588.1" y="223" width="5" height="206" fill="#e01000" opacity="0.38"/><rect x="589.6" y="223" width="2" height="206" fill="#800600" opacity="0.42"/><rect x="635.3" y="223" width="5" height="206" fill="#e01000" opacity="0.38"/><rect x="636.8" y="223" width="2" height="206" fill="#800600" opacity="0.42"/><rect x="682.5" y="223" width="5" height="206" fill="#e01000" opacity="0.38"/><rect x="684.0" y="223" width="2" height="206" fill="#800600" opacity="0.42"/><rect x="729.7" y="223" width="5" height="206" fill="#e01000" opacity="0.38"/><rect x="731.2" y="223" width="2" height="206" fill="#800600" opacity="0.42"/><rect x="776.9" y="223" width="5" height="206" fill="#e01000" opacity="0.38"/><rect x="778.4" y="223" width="2" height="206" fill="#800600" opacity="0.42"/><rect x="824.1" y="223" width="5" height="206" fill="#e01000" opacity="0.38"/><rect x="825.6" y="223" width="2" height="206" fill="#800600" opacity="0.42"/>
<rect x="427" y="223" width="3" height="206" fill="#c01000" opacity="0.7"/>
<rect x="846" y="223" width="3" height="206" fill="#c01000" opacity="0.7"/>
</g>
<g shape-rendering="auto">
<polyline points="427.5,236 438,223.5 838,223.5 848.5,234" fill="none" stroke="#fff2b0" stroke-width="1.5"/>
<line x1="848.8" y1="234" x2="848.8" y2="429" stroke="#ffe000" stroke-width="1.2"/>
<line x1="427" y1="429.5" x2="849.5" y2="429.5" stroke="#ffffff" stroke-width="1.8"/>
<line x1="427.3" y1="236" x2="427.3" y2="429" stroke="#ff5a20" stroke-width="0.8"/>
<circle cx="638" cy="222.3" r="1" fill="#fff"/>
</g>
</svg>
<div class="t" style="left:221.50px;width:200px;text-align:right;top:180.84px;font-size:12px;color:#000;">100</div>
<div class="t" style="left:221.50px;width:200px;text-align:right;top:250.34px;font-size:12px;color:#000;">200</div>
<div class="t" style="left:221.50px;width:200px;text-align:right;top:319.84px;font-size:12px;color:#000;">300</div>
<div class="t" style="left:221.50px;width:200px;text-align:right;top:389.34px;font-size:12px;color:#000;">400</div>
<div class="t" style="left:221.50px;width:200px;text-align:right;top:458.84px;font-size:12px;color:#000;">500</div>
<div class="t" style="left:221.50px;width:200px;text-align:right;top:528.34px;font-size:12px;color:#000;">600</div>
<div class="t" style="left:396.70px;width:200px;text-align:center;top:540.34px;font-size:12px;color:#000;">100</div>
<div class="t" style="left:467.50px;width:200px;text-align:center;top:540.34px;font-size:12px;color:#000;">200</div>
<div class="t" style="left:538.20px;width:200px;text-align:center;top:540.34px;font-size:12px;color:#000;">300</div>
<div class="t" style="left:608.50px;width:200px;text-align:center;top:540.34px;font-size:12px;color:#000;">400</div>
<div class="t" style="left:679.20px;width:200px;text-align:center;top:540.34px;font-size:12px;color:#000;">500</div>
<div class="t" style="left:749.50px;width:200px;text-align:center;top:540.34px;font-size:12px;color:#000;">600</div>
<svg style="position:absolute;left:0;top:0" width="856" height="688" viewBox="0 0 856 688">
<defs><linearGradient id="cb" x1="0" y1="0" x2="1" y2="0"><stop offset="0.000" stop-color="rgb(255,255,255)"/><stop offset="0.050" stop-color="rgb(255,255,203)"/><stop offset="0.100" stop-color="rgb(255,255,153)"/><stop offset="0.150" stop-color="rgb(255,255,101)"/><stop offset="0.200" stop-color="rgb(255,255,51)"/><stop offset="0.250" stop-color="rgb(255,255,0)"/><stop offset="0.300" stop-color="rgb(255,220,0)"/><stop offset="0.350" stop-color="rgb(255,187,0)"/><stop offset="0.400" stop-color="rgb(255,153,0)"/><stop offset="0.450" stop-color="rgb(255,119,0)"/><stop offset="0.500" stop-color="rgb(255,85,0)"/><stop offset="0.550" stop-color="rgb(255,50,0)"/><stop offset="0.600" stop-color="rgb(255,17,0)"/><stop offset="0.650" stop-color="rgb(237,0,0)"/><stop offset="0.700" stop-color="rgb(204,0,0)"/><stop offset="0.750" stop-color="rgb(170,0,0)"/><stop offset="0.800" stop-color="rgb(135,0,0)"/><stop offset="0.850" stop-color="rgb(102,0,0)"/><stop offset="0.900" stop-color="rgb(67,0,0)"/><stop offset="0.950" stop-color="rgb(34,0,0)"/><stop offset="1.000" stop-color="rgb(0,0,0)"/></linearGradient></defs>
<rect x="487.5" y="94.5" width="297" height="20" fill="url(#cb)" stroke="#000" stroke-width="1"/>
<path d="M516.8 94 v4 M516.8 115 v-4" stroke="#000" stroke-width="1"/><path d="M546.6 94 v4 M546.6 115 v-4" stroke="#000" stroke-width="1"/><path d="M576.4 94 v4 M576.4 115 v-4" stroke="#000" stroke-width="1"/><path d="M606.2 94 v4 M606.2 115 v-4" stroke="#000" stroke-width="1"/><path d="M636.0 94 v4 M636.0 115 v-4" stroke="#000" stroke-width="1"/><path d="M665.8 94 v4 M665.8 115 v-4" stroke="#000" stroke-width="1"/><path d="M695.6 94 v4 M695.6 115 v-4" stroke="#000" stroke-width="1"/><path d="M725.4 94 v4 M725.4 115 v-4" stroke="#000" stroke-width="1"/><path d="M755.2 94 v4 M755.2 115 v-4" stroke="#000" stroke-width="1"/>
</svg>
<div style="position:absolute;left:400px;top:81px;width:456px;height:20px;overflow:hidden">
<div class="t" style="left:67.80px;top:-4.00px;font-size:13px;color:#000;">520.80</div>
<div class="t" style="left:215.80px;top:-4.00px;font-size:13px;color:#000;">511.74</div>
<div class="t" style="left:355.50px;top:-4.00px;font-size:13px;color:#000;">502.68 mV</div>
</div>
<svg style="position:absolute;left:411px;top:562px" width="14" height="14" viewBox="0 0 14 14">
<rect x="0.5" y="0.5" width="12.5" height="12.5" rx="3" fill="#0b63c4"/>
<path d="M3.2 6.8 L5.6 9.2 L10 4.6" stroke="#fff" stroke-width="1.3" fill="none"/>
</svg>
<div class="t" style="left:427.70px;top:562.56px;font-size:12.8px;color:#000;transform:scaleX(0.9692);transform-origin:0 0;">Si intrinsic recombination</div>
<div class="t" style="left:491.50px;top:582.80px;font-size:15px;font-weight:bold;color:#000;letter-spacing:-0.025px;">Cell Front Side</div>
<div style="position:absolute;left:602px;top:572px;width:183px;height:25px;border:1px solid #cfcfcf;border-bottom-color:#b8b8b8;border-radius:4px;background:#fdfdfd"></div>
<div class="t" style="left:617.10px;top:579.05px;font-size:14px;color:#000;letter-spacing:0.270px;">Toggle Front/Back View</div>
<div class="t" style="left:419.60px;top:607.73px;font-size:14.5px;color:#000;letter-spacing:0.039px;">Vmpp= mV</div>
<svg style="position:absolute;left:0;top:0" width="856" height="688" viewBox="0 0 856 688">
<defs>
<linearGradient id="mapg" x1="0" y1="0" x2="0" y2="1">
<stop offset="0" stop-color="#f01000"/><stop offset="0.2" stop-color="#ff3000"/><stop offset="0.42" stop-color="#ffa000"/><stop offset="0.6" stop-color="#ffe820"/><stop offset="0.8" stop-color="#ffff90"/><stop offset="1" stop-color="#fffff4"/>
</linearGradient>
<radialGradient id="blob"><stop offset="0" stop-color="#c00000" stop-opacity="0.7"/><stop offset="1" stop-color="#c00000" stop-opacity="0"/></radialGradient>
<linearGradient id="sog" x1="0" y1="0" x2="1" y2="1"><stop offset="0" stop-color="#3270d8"/><stop offset="1" stop-color="#4a8ae8"/></linearGradient>
</defs>
<!-- FIND -->
<rect x="420.5" y="629.5" width="82" height="52" fill="#fff" stroke="#111" stroke-width="1"/>
<path d="M421 634.5 L484 634.5 Q491 634.5 492 642 L497 681 L421 681 Z" fill="#f7c520"/>
<path d="M420.5 634.5 L484 634.5 Q491 634.5 492 642 L496.5 680.5" fill="none" stroke="#b81414" stroke-width="2.4"/>
<circle cx="420.8" cy="634.2" r="3.6" fill="#c4161c"/>
<circle cx="489.8" cy="638.6" r="3.4" fill="#c4161c"/>
<circle cx="496.4" cy="680.4" r="3.8" fill="#c4161c"/>
<text x="452" y="655.5" text-anchor="middle" font-size="13" style="font-family:&quot;Liberation Sans&quot;,sans-serif;font-weight:bold;stroke:#000;stroke-width:0.5px" fill="#111" textLength="34" lengthAdjust="spacingAndGlyphs">FIND</text>
<text x="423.5" y="670" font-size="13" style="font-family:&quot;Liberation Sans&quot;,sans-serif;font-weight:bold;stroke:#000;stroke-width:0.5px" fill="#111">J</text>
<text x="431" y="673" font-size="9" style="font-family:&quot;Liberation Sans&quot;,sans-serif;font-weight:bold;stroke:#000;stroke-width:0.5px" fill="#111">SC</text>
<text x="444" y="670" font-size="13" style="font-family:&quot;Liberation Sans&quot;,sans-serif;font-weight:bold;stroke:#000;stroke-width:0.5px" fill="#111">V</text>
<text x="452.5" y="673" font-size="9" style="font-family:&quot;Liberation Sans&quot;,sans-serif;font-weight:bold;stroke:#000;stroke-width:0.5px" fill="#111">OC</text>
<text x="465" y="670" font-size="13" style="font-family:&quot;Liberation Sans&quot;,sans-serif;font-weight:bold;stroke:#000;stroke-width:0.5px" fill="#111" textLength="28" lengthAdjust="spacingAndGlyphs">MPP</text>
<!-- JV SWEEP -->
<rect x="513.5" y="629.5" width="82" height="52" fill="#fff" stroke="#111" stroke-width="1"/>
<path d="M514 634.5 L574 634.5 Q584 634.5 586 650 L590.5 681 L514 681 Z" fill="#f7c520"/>
<path d="M514 634.5 L574 634.5 Q584 634.5 586 650 L590.5 681" fill="none" stroke="#a81010" stroke-width="1.4"/>
<text x="545" y="656" text-anchor="middle" font-size="14" style="font-family:&quot;Liberation Sans&quot;,sans-serif;font-weight:bold;stroke:#000;stroke-width:0.5px" fill="#111" textLength="22" lengthAdjust="spacingAndGlyphs">JV</text>
<text x="549" y="673" text-anchor="middle" font-size="14" style="font-family:&quot;Liberation Sans&quot;,sans-serif;font-weight:bold;stroke:#000;stroke-width:0.5px" fill="#111" textLength="62" lengthAdjust="spacingAndGlyphs">SWEEP</text>
<!-- MAP -->
<rect x="608.2" y="629.7" width="51.5" height="52.5" fill="url(#mapg)" stroke="#111" stroke-width="1.6"/>
<ellipse cx="617" cy="638" rx="4.5" ry="9" fill="url(#blob)"/>
<ellipse cx="634" cy="638" rx="4.5" ry="9" fill="url(#blob)"/>
<ellipse cx="651" cy="638" rx="4.5" ry="9" fill="url(#blob)"/>
<rect x="609" y="668" width="50" height="13" fill="#fffff0" opacity="0.35"/>
<text x="634" y="664" text-anchor="middle" font-size="20" style="font-family:&quot;Liberation Sans&quot;,sans-serif;font-weight:bold;stroke:#000;stroke-width:0.5px" fill="#000" textLength="46" lengthAdjust="spacingAndGlyphs">MAP</text>
<!-- REPORT -->
<path d="M680.5 638 L680.5 680.5 L719.5 680.5 L719.5 633.5 L715 633.5" fill="none" stroke="#1f5aa8" stroke-width="2.2"/>
<path d="M677.5 638 L686 629 L715 629 L715 676.5 L677.5 676.5 Z" fill="#fff" stroke="#1f5aa8" stroke-width="2.2"/>
<path d="M677.5 638 L685 638 L686 629" fill="none" stroke="#2a62b4" stroke-width="1.2"/>
<text x="698.5" y="658.6" text-anchor="middle" font-size="15" style="font-family:&quot;Liberation Sans&quot;,sans-serif;font-weight:bold;stroke:#000;stroke-width:0.5px" fill="#000" textLength="52" lengthAdjust="spacingAndGlyphs">REPORT</text>
<!-- SAVE -->
<rect x="736.5" y="628.8" width="51" height="52.3" fill="#fff" stroke="#111" stroke-width="1.6"/>
<path d="M756 630 L787.3 630 L787.3 644 Z" fill="#cdcdcd"/>
<path d="M737.5 631.5 L756 630 L787.3 644 L787.3 657 Z" fill="#ececec"/>
<path d="M737.3 633.2 L787.5 657.2" stroke="#6a6a6a" stroke-width="0.9"/>
<path d="M756 630 L787.5 644" stroke="#8a8a8a" stroke-width="0.7"/>
<path d="M753 631.5 L764.6 636.5 L764.6 641 L753 636 Z" fill="#9c9c9c" stroke="#666" stroke-width="0.6"/>
<circle cx="768.4" cy="642.7" r="0.9" fill="#444"/>
<circle cx="773.6" cy="645.6" r="0.9" fill="#444"/>
<path d="M770 646.5 L782.6 643.5 L782.6 651.5 L770 655.5 Z" fill="#8c8c8c" stroke="#555" stroke-width="0.6"/>
<path d="M738.9 648.9 L760.7 642.1 L771 647.6 L745.3 654 Z" fill="#fafafa" stroke="#8a8a8a" stroke-width="0.6"/>
<path d="M745.3 654 L771 647.6 L771 659.1 L745.3 664.3 Z" fill="#dcdcdc" stroke="#8a8a8a" stroke-width="0.6"/>
<path d="M738.9 648.9 L745.3 654 L745.3 664.3 L738.9 660 Z" fill="#e8e8e8" stroke="#8a8a8a" stroke-width="0.6"/>
<rect x="745.6" y="654.6" width="6.4" height="9" fill="#fff" stroke="#aaa" stroke-width="0.5"/>
<text x="762" y="678" text-anchor="middle" font-size="17" style="font-family:&quot;Liberation Sans&quot;,sans-serif;font-weight:bold;stroke:#000;stroke-width:0.5px" fill="#000" textLength="47" lengthAdjust="spacingAndGlyphs">SAVE</text>
<!-- START OVER -->
<path d="M806 641 C814 632 826 628 836 630 C848 633 853 646 851 658 C849 668 845 676 840 681 C843 672 845 662 843 654 C841 645 834 640 826 641 C820 642 817 646 815 651 Z" fill="url(#sog)"/>
<path d="M797 632 L797 659 L823 659 Z" fill="#3270d8"/>
<text x="818.5" y="669.5" text-anchor="middle" font-size="12" style="font-family:&quot;Liberation Sans&quot;,sans-serif;font-weight:bold;stroke:#000;stroke-width:0.5px" fill="#000" textLength="47" lengthAdjust="spacingAndGlyphs">START</text>
<text x="819" y="681" text-anchor="middle" font-size="12" style="font-family:&quot;Liberation Sans&quot;,sans-serif;font-weight:bold;stroke:#000;stroke-width:0.5px" fill="#000" textLength="40" lengthAdjust="spacingAndGlyphs">OVER</text>
</svg>
<svg style="position:absolute;left:846px;top:0" width="10" height="10" viewBox="846 0 10 10"><path d="M846 0 L856 0 L856 6 A7.5 7.5 0 0 0 849 2 Z" fill="#1c1c1c"/></svg>
<svg style="position:absolute;left:846px;top:676px" width="10" height="12" viewBox="846 676 10 12"><path d="M856 680 L856 688 L846 688 L846 686 A8 8 0 0 0 856 680 Z" fill="#2a2a2a"/></svg>
</body></html>
